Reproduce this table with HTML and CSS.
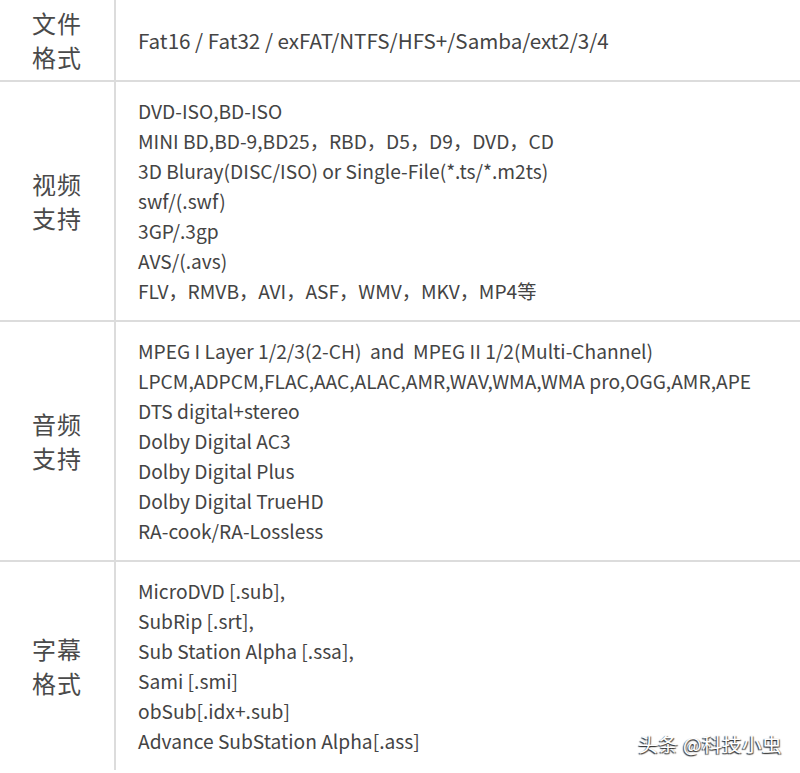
FILE: index.html
```html
<!DOCTYPE html>
<html lang="zh-CN">

<head>
    <meta charset="UTF-8">
    <title>支持格式</title>
    <link rel="stylesheet" href="styles.css">
</head>

<body>
    <div class="spec-table">
        <div class="spec-row row-files">
            <div class="spec-label">文件<br>格式</div>
            <div class="spec-value">
                <div>Fat16 / Fat32 / exFAT/NTFS/HFS+/Samba/ext2/3/4</div>
            </div>
        </div>
        <div class="spec-row">
            <div class="spec-label">视频<br>支持</div>
            <div class="spec-value">
                <div>DVD-ISO,BD-ISO</div>
                <div>MINI BD,BD-9,BD25，RBD，D5，D9，DVD，CD</div>
                <div>3D Bluray(DISC/ISO) or Single-File(*.ts/*.m2ts)</div>
                <div>swf/(.swf)</div>
                <div>3GP/.3gp</div>
                <div>AVS/(.avs)</div>
                <div>FLV，RMVB，AVI，ASF，WMV，MKV，MP4等</div>
            </div>
        </div>
        <div class="spec-row">
            <div class="spec-label">音频<br>支持</div>
            <div class="spec-value">
                <div>MPEG I Layer 1/2/3(2-CH)&nbsp; and&nbsp; MPEG II 1/2(Multi-Channel)</div>
                <div>LPCM,ADPCM,FLAC,AAC,ALAC,AMR,WAV,WMA,WMA pro,OGG,AMR,APE</div>
                <div>DTS digital+stereo</div>
                <div>Dolby Digital AC3</div>
                <div>Dolby Digital Plus</div>
                <div>Dolby Digital TrueHD</div>
                <div>RA-cook/RA-Lossless</div>
            </div>
        </div>
        <div class="spec-row">
            <div class="spec-label">字幕<br>格式</div>
            <div class="spec-value">
                <div>MicroDVD [.sub],</div>
                <div>SubRip [.srt],</div>
                <div>Sub Station Alpha [.ssa],</div>
                <div>Sami [.smi]</div>
                <div>obSub[.idx+.sub]</div>
                <div>Advance SubStation Alpha[.ass]</div>
            </div>
        </div>
    </div>

    <!-- watermark over the last row -->
    <div class="watermark">头条 @科技小虫</div>
</body>

</html>
```

FILE: styles.css
```css
body {
    margin: 0;
    background: #fff;
    color: #444;
    font-family: 'Noto Sans CJK SC', 'Noto Sans', sans-serif;
    height: 773px;
    overflow: hidden;
    position: relative;
}

.spec-table {
    width: 800px;
}

.spec-row {
    display: flex;
    border-bottom: 2px solid #dcdcdc;
}

.spec-row:last-child {
    border-bottom: none;
}

.spec-label {
    width: 114px;
    flex-shrink: 0;
    border-right: 2px solid #dcdcdc;
    display: flex;
    align-items: center;
    justify-content: center;
    text-align: center;
    font-size: 24px;
    line-height: 34px;
    letter-spacing: 1px;
    color: #4a4a4a;
}

.spec-value {
    flex: 1;
    padding: 14px 0 14px 22px;
    font-size: 19.2px;
    line-height: 30px;
    display: flex;
    flex-direction: column;
    justify-content: center;
}

.row-files .spec-value {
    padding: 0 0 0 22px;
    font-size: 20.6px;
}

.row-files .spec-label {
    padding: 6px 0;
}

.watermark {
    position: absolute;
    right: 18px;
    bottom: 15px;
    font-size: 19.5px;
    color: #fff;
    text-shadow: -1px 1px 1px #333, 1px 1px 1px #555;
    letter-spacing: 0.5px;
}
```
